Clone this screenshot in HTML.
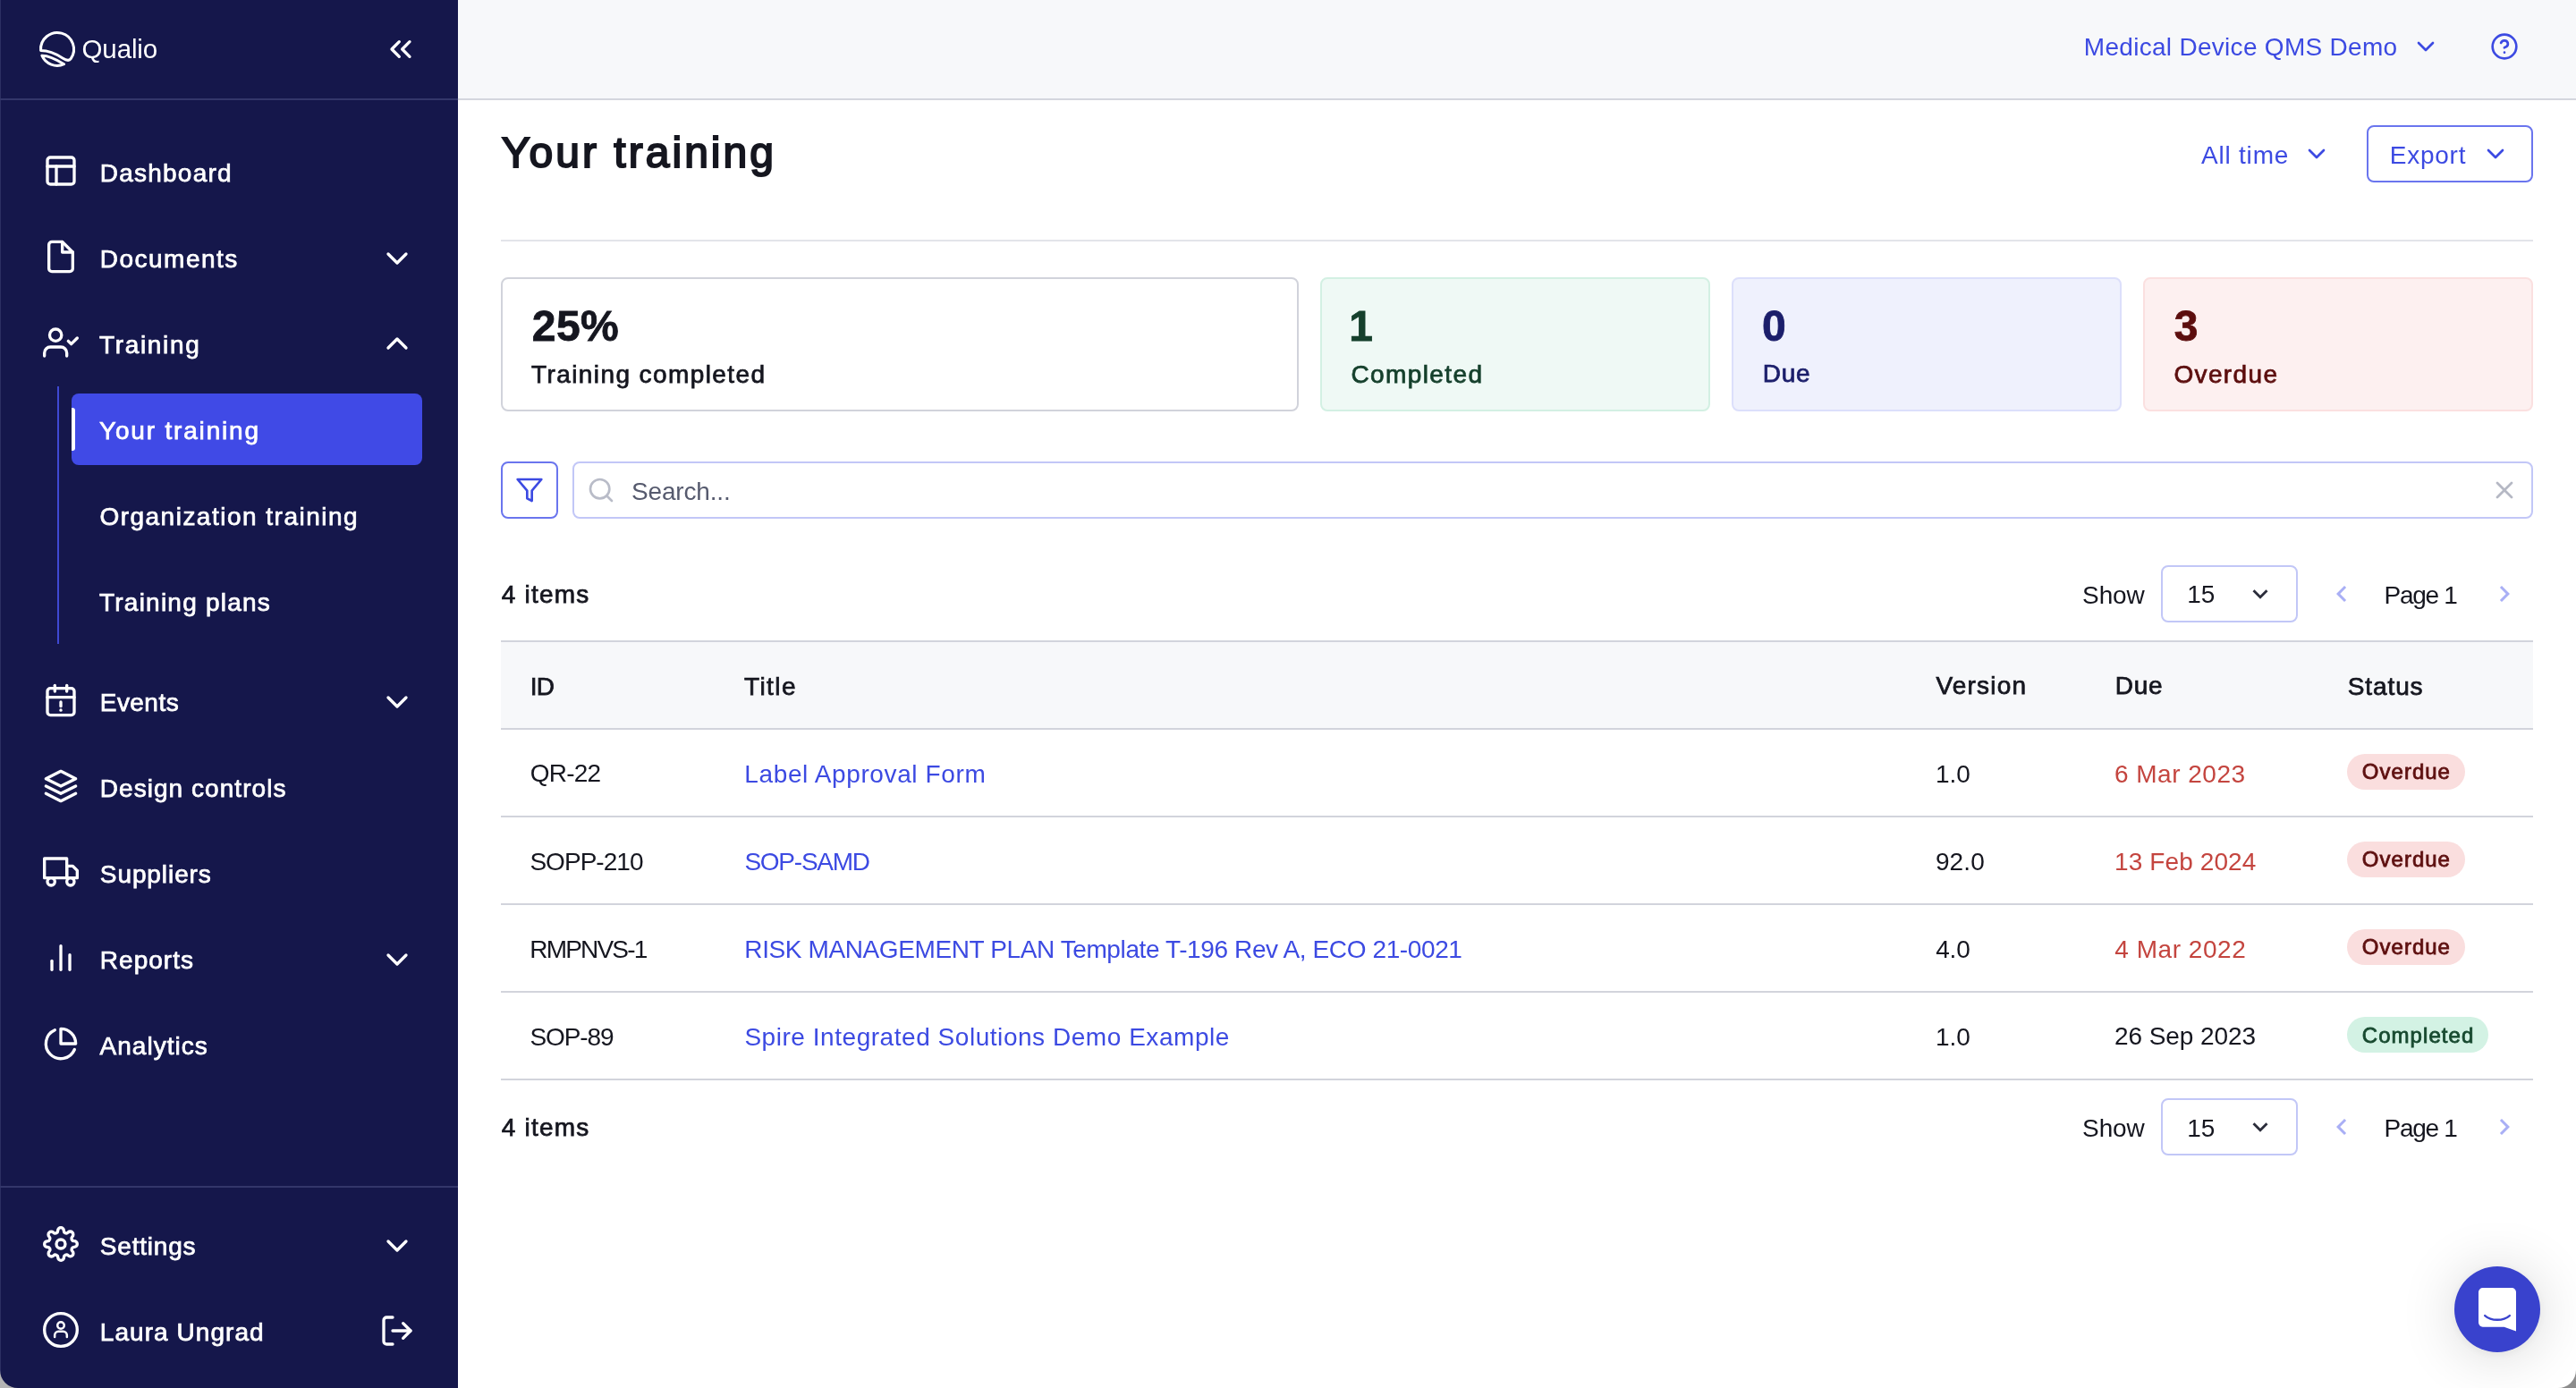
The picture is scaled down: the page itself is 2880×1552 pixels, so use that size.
<!DOCTYPE html>
<html lang="en">
<head>
<meta charset="utf-8">
<title>Your training - Qualio</title>
<style>
*{box-sizing:border-box;margin:0;padding:0}
html,body{width:2880px;height:1552px;overflow:hidden;background:#fff}
body{position:relative;font-family:"Liberation Sans",sans-serif;font-size:28px;color:#15161f}
.a{position:absolute}
svg.a{display:block;fill:none;stroke:currentColor;stroke-width:2;stroke-linecap:round;stroke-linejoin:round;overflow:visible}
svg.f{fill:currentColor;stroke:none}
.t{position:absolute;white-space:nowrap}
#root{position:absolute;left:0;top:0;width:2880px;height:1552px;will-change:transform}
</style>
</head>
<body>
<div id="root">
<div class="a" id="side" style="left:0;top:0;width:512px;height:1552px;background:#15174b"></div>
<div class="a" style="left:0px;top:0px;width:1px;height:1552px;background:#2c2f62"></div>
<div id="nav" style="color:#fff">
<svg class="a" style="left:44px;top:35px;width:40px;height:40px;stroke-width:3" viewBox="0 0 40 40"><path d="M1.6 21.5A18.5 18.5 0 1 1 35.2 30.6C33.5 33.2 30 32.6 26 30C20 26 12 21.5 1.6 21.5Z"/><path d="M2.9 27.2C11 27 19 31.5 27.6 36.7A18.5 18.5 0 0 1 2.9 27.2Z"/></svg>
<div class="t" style="left:91.52px;top:40.00px;font-size:29.5px;line-height:29.5px;letter-spacing:-0.119px">Qualio</div>
<svg class="a" style="left:428px;top:35px;width:40px;height:40px" viewBox="0 0 24 24"><polyline points="11 17 6 12 11 7"/><polyline points="18 17 13 12 18 7"/></svg>
<div class="a" style="left:0px;top:110px;width:512px;height:2px;background:#33366a"></div>
<svg class="a" style="left:48px;top:171px;width:40px;height:40px" viewBox="0 0 24 24"><rect x="3" y="3" width="18" height="18" rx="2" ry="2"/><line x1="3" y1="9" x2="21" y2="9"/><line x1="9" y1="21" x2="9" y2="9"/></svg>
<div class="t" style="left:111.76px;top:179.75px;font-size:28px;line-height:28px;letter-spacing:1.234px;-webkit-text-stroke:0.75px">Dashboard</div>
<svg class="a" style="left:48px;top:267px;width:40px;height:40px" viewBox="0 0 24 24"><path d="M13 2H6a2 2 0 0 0-2 2v16a2 2 0 0 0 2 2h12a2 2 0 0 0 2-2V9z"/><polyline points="13 2 13 9 20 9"/></svg>
<div class="t" style="left:111.76px;top:276.12px;font-size:28px;line-height:28px;letter-spacing:1.494px;-webkit-text-stroke:0.75px">Documents</div>
<svg class="a" style="left:424px;top:268.5px;width:40px;height:40px" viewBox="0 0 24 24"><polyline points="6 9 12 15 18 9"/></svg>
<svg class="a" style="left:48px;top:363px;width:40px;height:40px" viewBox="0 0 24 24"><path d="M16 21v-2a4 4 0 0 0-4-4H5a4 4 0 0 0-4 4v2"/><circle cx="8.5" cy="7" r="4"/><polyline points="17 11 19 13 23 9"/></svg>
<div class="t" style="left:110.99px;top:372.15px;font-size:28px;line-height:28px;letter-spacing:1.677px;-webkit-text-stroke:0.75px">Training</div>
<svg class="a" style="left:424px;top:363.75px;width:40px;height:40px" viewBox="0 0 24 24"><polyline points="18 15 12 9 6 15"/></svg>
<svg class="a" style="left:48px;top:763px;width:40px;height:40px" viewBox="0 0 24 24"><rect x="3" y="4" width="18" height="18" rx="2" ry="2"/><line x1="16" y1="2" x2="16" y2="6"/><line x1="8" y1="2" x2="8" y2="6"/><line x1="3" y1="10" x2="21" y2="10"/><line x1="12" y1="13.2" x2="12" y2="16"/><line x1="12" y1="18.6" x2="12" y2="18.7"/></svg>
<div class="t" style="left:111.76px;top:772.12px;font-size:28px;line-height:28px;letter-spacing:0.458px;-webkit-text-stroke:0.75px">Events</div>
<svg class="a" style="left:424px;top:764.5px;width:40px;height:40px" viewBox="0 0 24 24"><polyline points="6 9 12 15 18 9"/></svg>
<svg class="a" style="left:48px;top:859px;width:40px;height:40px" viewBox="0 0 24 24"><polygon points="12 2 2 7 12 12 22 7 12 2"/><polyline points="2 17 12 22 22 17"/><polyline points="2 12 12 17 22 12"/></svg>
<div class="t" style="left:111.76px;top:867.62px;font-size:28px;line-height:28px;letter-spacing:1.048px;-webkit-text-stroke:0.75px">Design controls</div>
<svg class="a" style="left:48px;top:955px;width:40px;height:40px" viewBox="0 0 24 24"><rect x="1" y="3" width="15" height="13"/><polygon points="16 8 20 8 23 11 23 16 16 16 16 8"/><circle cx="5.5" cy="18.5" r="2.5"/><circle cx="18.5" cy="18.5" r="2.5"/></svg>
<div class="t" style="left:111.81px;top:963.62px;font-size:28px;line-height:28px;letter-spacing:0.916px;-webkit-text-stroke:0.75px">Suppliers</div>
<svg class="a" style="left:48px;top:1051px;width:40px;height:40px" viewBox="0 0 24 24"><line x1="18" y1="20" x2="18" y2="10"/><line x1="12" y1="20" x2="12" y2="4"/><line x1="6" y1="20" x2="6" y2="14"/></svg>
<div class="t" style="left:111.76px;top:1060.00px;font-size:28px;line-height:28px;letter-spacing:1.042px;-webkit-text-stroke:0.75px">Reports</div>
<svg class="a" style="left:424px;top:1052.5px;width:40px;height:40px" viewBox="0 0 24 24"><polyline points="6 9 12 15 18 9"/></svg>
<svg class="a" style="left:48px;top:1147px;width:40px;height:40px" viewBox="0 0 24 24"><path d="M21.21 15.89A10 10 0 1 1 8 2.83"/><path d="M22 12A10 10 0 0 0 12 2v10z"/></svg>
<div class="t" style="left:111.42px;top:1155.62px;font-size:28px;line-height:28px;letter-spacing:1.052px;-webkit-text-stroke:0.75px">Analytics</div>
<svg class="a" style="left:48px;top:1371px;width:40px;height:40px" viewBox="0 0 24 24"><circle cx="12" cy="12" r="3"/><path d="M19.4 15a1.65 1.65 0 0 0 .33 1.82l.06.06a2 2 0 0 1 0 2.83 2 2 0 0 1-2.83 0l-.06-.06a1.65 1.65 0 0 0-1.82-.33 1.65 1.65 0 0 0-1 1.51V21a2 2 0 0 1-2 2 2 2 0 0 1-2-2v-.09A1.65 1.65 0 0 0 9 19.4a1.65 1.65 0 0 0-1.82.33l-.06.06a2 2 0 0 1-2.83 0 2 2 0 0 1 0-2.83l.06-.06a1.65 1.65 0 0 0 .33-1.82 1.65 1.65 0 0 0-1.51-1H3a2 2 0 0 1-2-2 2 2 0 0 1 2-2h.09A1.65 1.65 0 0 0 4.6 9a1.65 1.65 0 0 0-.33-1.82l-.06-.06a2 2 0 0 1 0-2.83 2 2 0 0 1 2.83 0l.06.06a1.65 1.65 0 0 0 1.82.33H9a1.65 1.65 0 0 0 1-1.51V3a2 2 0 0 1 2-2 2 2 0 0 1 2 2v.09a1.65 1.65 0 0 0 1 1.51 1.65 1.65 0 0 0 1.82-.33l.06-.06a2 2 0 0 1 2.83 0 2 2 0 0 1 0 2.83l-.06.06a1.65 1.65 0 0 0-.33 1.82V9a1.65 1.65 0 0 0 1.51 1H21a2 2 0 0 1 2 2 2 2 0 0 1-2 2h-.09a1.65 1.65 0 0 0-1.51 1z"/></svg>
<div class="t" style="left:111.81px;top:1380.15px;font-size:28px;line-height:28px;letter-spacing:0.797px;-webkit-text-stroke:0.75px">Settings</div>
<svg class="a" style="left:424px;top:1372.5px;width:40px;height:40px" viewBox="0 0 24 24"><polyline points="6 9 12 15 18 9"/></svg>
<svg class="a" style="left:48px;top:1467px;width:40px;height:40px" viewBox="0 0 24 24"><circle cx="12" cy="12" r="11"/><circle cx="12" cy="9" r="2.25" stroke-width="1.5"/><path stroke-width="1.5" d="M7.9 16.8v-1.2a2.5 2.5 0 0 1 2.5-2.5h3.2a2.5 2.5 0 0 1 2.5 2.5v1.2"/></svg>
<div class="t" style="left:111.76px;top:1475.62px;font-size:28px;line-height:28px;letter-spacing:1.060px;-webkit-text-stroke:0.75px">Laura Ungrad</div>
<svg class="a" style="left:424px;top:1468px;width:40px;height:40px" viewBox="0 0 24 24"><path d="M9 21H5a2 2 0 0 1-2-2V5a2 2 0 0 1 2-2h4"/><polyline points="16 17 21 12 16 7"/><line x1="21" y1="12" x2="9" y2="12"/></svg>
<div class="a" style="left:64px;top:432px;width:2px;height:288px;background:#3f49d3"></div>
<div class="a" style="left:80px;top:440px;width:392px;height:80px;border-radius:8px;background:#404ae6"></div>
<div class="a" style="left:80px;top:456px;width:4px;height:48px;border-radius:0 3px 3px 0;background:#fff"></div>
<div class="t" style="left:110.99px;top:468.15px;font-size:28px;line-height:28px;letter-spacing:1.824px;-webkit-text-stroke:0.75px">Your training</div>
<div class="t" style="left:111.38px;top:564.15px;font-size:28px;line-height:28px;letter-spacing:1.494px;-webkit-text-stroke:0.75px">Organization training</div>
<div class="t" style="left:110.99px;top:659.62px;font-size:28px;line-height:28px;letter-spacing:1.231px;-webkit-text-stroke:0.75px">Training plans</div>
<div class="a" style="left:0px;top:1326px;width:512px;height:2px;background:#33366a"></div>
</div>
<div class="a" style="left:512px;top:0px;width:2368px;height:110px;background:#f7f8fa"></div>
<div class="a" style="left:512px;top:110px;width:2368px;height:2px;background:#d4d6de"></div>
<div class="t" style="left:2329.81px;top:39.17px;font-size:28px;line-height:28px;letter-spacing:0.293px;color:#3c4ae2">Medical Device QMS Demo</div>
<svg class="a" style="left:2696px;top:36px;width:32px;height:32px;color:#3c4ae2" viewBox="0 0 24 24"><polyline points="6 9 12 15 18 9"/></svg>
<svg class="a" style="left:2784px;top:36px;width:32px;height:32px;color:#3c4ae2" viewBox="0 0 24 24"><circle cx="12" cy="12" r="10"/><path d="M9.09 9a3 3 0 0 1 5.83 1c0 2-3 3-3 3"/><line x1="12" y1="17" x2="12.01" y2="17"/></svg>
<div class="t" style="left:560.80px;top:146.57px;font-size:48px;line-height:48px;letter-spacing:3.038px;-webkit-text-stroke:2.0px">Your training</div>
<div class="t" style="left:2461.00px;top:159.70px;font-size:28px;line-height:28px;letter-spacing:0.789px;color:#3c4ae2">All time</div>
<svg class="a" style="left:2574px;top:156px;width:32px;height:32px;color:#3c4ae2" viewBox="0 0 24 24"><polyline points="6 9 12 15 18 9"/></svg>
<div class="a" style="left:2646px;top:140px;width:186px;height:64px;border:2px solid #6a75ee;border-radius:8px"></div>
<div class="t" style="left:2671.81px;top:159.95px;font-size:28px;line-height:28px;letter-spacing:0.744px;color:#3c4ae2">Export</div>
<svg class="a" style="left:2774px;top:156px;width:32px;height:32px;color:#3c4ae2" viewBox="0 0 24 24"><polyline points="6 9 12 15 18 9"/></svg>
<div class="a" style="left:560px;top:268px;width:2272px;height:2px;background:#e3e4ea"></div>
<div class="a" style="left:560px;top:310px;width:892px;height:150px;border:2px solid #d1d3db;border-radius:8px;background:#fff"></div>
<div class="t" style="left:594.80px;top:341.22px;font-size:48px;line-height:48px;letter-spacing:0.419px;font-weight:700;-webkit-text-stroke:0.8px;color:#15161f">25%</div>
<div class="t" style="left:593.99px;top:404.57px;font-size:28px;line-height:28px;letter-spacing:1.414px;-webkit-text-stroke:0.75px;color:#15161f">Training completed</div>
<div class="a" style="left:1476px;top:310px;width:436px;height:150px;border:2px solid #d3f0e3;border-radius:8px;background:#eff9f5"></div>
<div class="t" style="left:1508.18px;top:341.22px;font-size:48px;line-height:48px;font-weight:700;-webkit-text-stroke:0.8px;color:#15402c">1</div>
<div class="t" style="left:1510.38px;top:404.57px;font-size:28px;line-height:28px;letter-spacing:1.396px;-webkit-text-stroke:0.75px;color:#15402c">Completed</div>
<div class="a" style="left:1936px;top:310px;width:436px;height:150px;border:2px solid #dcdffb;border-radius:8px;background:#eff1fd"></div>
<div class="t" style="left:1970.00px;top:341.22px;font-size:48px;line-height:48px;font-weight:700;-webkit-text-stroke:0.8px;color:#1b1e6b">0</div>
<div class="t" style="left:1970.76px;top:404.27px;font-size:28px;line-height:28px;letter-spacing:0.753px;-webkit-text-stroke:0.75px;color:#1b1e6b">Due</div>
<div class="a" style="left:2396px;top:310px;width:436px;height:150px;border:2px solid #fbe0e0;border-radius:8px;background:#fdf0f0"></div>
<div class="t" style="left:2430.75px;top:341.22px;font-size:48px;line-height:48px;font-weight:700;-webkit-text-stroke:0.8px;color:#5c0e0e">3</div>
<div class="t" style="left:2430.38px;top:404.70px;font-size:28px;line-height:28px;letter-spacing:1.382px;-webkit-text-stroke:0.75px;color:#5c0e0e">Overdue</div>
<div class="a" style="left:560px;top:516px;width:64px;height:64px;border:2px solid #6a75ee;border-radius:8px;background:#fff"></div>
<svg class="a" style="left:576px;top:532px;width:32px;height:32px;color:#3c4ae2" viewBox="0 0 24 24"><polygon points="22 3 2 3 10 12.46 10 19 14 21 14 12.46 22 3"/></svg>
<div class="a" style="left:640px;top:516px;width:2192px;height:64px;border:2px solid #c2c7f7;border-radius:8px;background:#fff"></div>
<svg class="a" style="left:656px;top:532px;width:32px;height:32px;color:#b9bcc8" viewBox="0 0 24 24"><circle cx="11" cy="11" r="8"/><line x1="21" y1="21" x2="16.65" y2="16.65"/></svg>
<div class="t" style="left:706.12px;top:535.80px;font-size:28px;line-height:28px;letter-spacing:-0.188px;color:#565a6e">Search...</div>
<svg class="a" style="left:2784px;top:532px;width:32px;height:32px;color:#b5b8c4" viewBox="0 0 24 24"><line x1="18" y1="6" x2="6" y2="18"/><line x1="6" y1="6" x2="18" y2="18"/></svg>
<div class="t" style="left:560.67px;top:651.42px;font-size:28px;line-height:28px;letter-spacing:1.234px;-webkit-text-stroke:0.75px">4 items</div>
<div class="t" style="left:2328.12px;top:651.70px;font-size:28px;line-height:28px;letter-spacing:-0.143px">Show</div>
<div class="a" style="left:2415.5px;top:632px;width:153px;height:64px;border:2px solid #c2c7f7;border-radius:8px;background:#fff"></div>
<div class="t" style="left:2445.30px;top:651.27px;font-size:28px;line-height:28px;letter-spacing:-0.177px">15</div>
<svg class="a f" style="left:2509.8px;top:647.2px;width:34px;height:34px;color:#2b2d3b" viewBox="0 0 24 24"><path d="M16.59 8.59L12 13.17 7.41 8.59 6 10l6 6 6-6z"/></svg>
<svg class="a f" style="left:2599.5px;top:646.3px;width:36px;height:36px;color:#a9aff5" viewBox="0 0 24 24"><path d="M15.41 7.41L14 6l-6 6 6 6 1.41-1.41L10.83 12z"/></svg>
<div class="t" style="left:2665.49px;top:651.95px;font-size:28px;line-height:28px;letter-spacing:-1.264px">Page 1</div>
<svg class="a f" style="left:2781.5px;top:646.3px;width:36px;height:36px;color:#a9aff5" viewBox="0 0 24 24"><path d="M10 6L8.59 7.41 13.17 12l-4.58 4.59L10 18l6-6z"/></svg>
<div class="a" style="left:560px;top:716px;width:2272px;height:98px;background:#f7f8fa"></div>
<div class="a" style="left:560px;top:716px;width:2272px;height:2px;background:#d2d4dc"></div>
<div class="a" style="left:560px;top:814px;width:2272px;height:2px;background:#d2d4dc"></div>
<div class="a" style="left:560px;top:912px;width:2272px;height:2px;background:#d2d4dc"></div>
<div class="a" style="left:560px;top:1010px;width:2272px;height:2px;background:#d2d4dc"></div>
<div class="a" style="left:560px;top:1108px;width:2272px;height:2px;background:#d2d4dc"></div>
<div class="a" style="left:560px;top:1206px;width:2272px;height:2px;background:#d2d4dc"></div>
<div class="t" style="left:592.76px;top:753.55px;font-size:28px;line-height:28px;letter-spacing:-0.814px;-webkit-text-stroke:0.75px">ID</div>
<div class="t" style="left:831.99px;top:753.70px;font-size:28px;line-height:28px;letter-spacing:1.415px;-webkit-text-stroke:0.75px">Title</div>
<div class="t" style="left:2164.43px;top:753.42px;font-size:28px;line-height:28px;letter-spacing:1.205px;-webkit-text-stroke:0.75px">Version</div>
<div class="t" style="left:2364.76px;top:753.27px;font-size:28px;line-height:28px;letter-spacing:0.753px;-webkit-text-stroke:0.75px">Due</div>
<div class="t" style="left:2624.81px;top:753.55px;font-size:28px;line-height:28px;letter-spacing:0.888px;-webkit-text-stroke:0.75px">Status</div>
<div class="t" style="left:592.75px;top:850.80px;font-size:28px;line-height:28px;letter-spacing:-0.809px">QR-22</div>
<div class="t" style="left:832.34px;top:851.57px;font-size:28px;line-height:28px;letter-spacing:0.615px;color:#3c4ae2">Label Approval Form</div>
<div class="t" style="left:2164.09px;top:851.55px;font-size:28px;line-height:28px;letter-spacing:-0.149px">1.0</div>
<div class="t" style="left:2363.95px;top:851.55px;font-size:28px;line-height:28px;letter-spacing:0.495px;color:#c4453f">6 Mar 2023</div>
<div class="a" style="left:2624px;top:843px;width:132px;height:40px;border-radius:20px;background:#fadede"></div>
<div class="t" style="left:2640.86px;top:851.16px;font-size:24px;line-height:24px;letter-spacing:1.002px;-webkit-text-stroke:0.8px;color:#5e1010">Overdue</div>
<div class="t" style="left:592.39px;top:949.55px;font-size:28px;line-height:28px;letter-spacing:-0.953px">SOPP-210</div>
<div class="t" style="left:832.39px;top:949.55px;font-size:28px;line-height:28px;letter-spacing:-1.233px;color:#3c4ae2">SOP-SAMD</div>
<div class="t" style="left:2163.95px;top:949.55px;font-size:28px;line-height:28px;letter-spacing:0.100px">92.0</div>
<div class="t" style="left:2364.09px;top:949.70px;font-size:28px;line-height:28px;letter-spacing:0.098px;color:#c4453f">13 Feb 2024</div>
<div class="a" style="left:2624px;top:941px;width:132px;height:40px;border-radius:20px;background:#fadede"></div>
<div class="t" style="left:2640.86px;top:949.16px;font-size:24px;line-height:24px;letter-spacing:1.002px;-webkit-text-stroke:0.8px;color:#5e1010">Overdue</div>
<div class="t" style="left:592.34px;top:1047.55px;font-size:28px;line-height:28px;letter-spacing:-1.823px">RMPNVS-1</div>
<div class="t" style="left:832.34px;top:1047.57px;font-size:28px;line-height:28px;letter-spacing:-0.390px;color:#3c4ae2">RISK MANAGEMENT PLAN Template T-196 Rev A, ECO 21-0021</div>
<div class="t" style="left:2164.25px;top:1047.55px;font-size:28px;line-height:28px;letter-spacing:-0.230px">4.0</div>
<div class="t" style="left:2364.25px;top:1047.55px;font-size:28px;line-height:28px;letter-spacing:0.538px;color:#c4453f">4 Mar 2022</div>
<div class="a" style="left:2624px;top:1039px;width:132px;height:40px;border-radius:20px;background:#fadede"></div>
<div class="t" style="left:2640.86px;top:1047.16px;font-size:24px;line-height:24px;letter-spacing:1.002px;-webkit-text-stroke:0.8px;color:#5e1010">Overdue</div>
<div class="t" style="left:592.39px;top:1145.55px;font-size:28px;line-height:28px;letter-spacing:-1.058px">SOP-89</div>
<div class="t" style="left:832.39px;top:1145.57px;font-size:28px;line-height:28px;letter-spacing:0.541px;color:#3c4ae2">Spire Integrated Solutions Demo Example</div>
<div class="t" style="left:2164.09px;top:1145.55px;font-size:28px;line-height:28px;letter-spacing:-0.149px">1.0</div>
<div class="t" style="left:2363.95px;top:1145.42px;font-size:28px;line-height:28px;letter-spacing:-0.061px">26 Sep 2023</div>
<div class="a" style="left:2624px;top:1137px;width:158px;height:40px;border-radius:20px;background:#d3f2e4"></div>
<div class="t" style="left:2640.76px;top:1145.76px;font-size:24px;line-height:24px;letter-spacing:1.057px;-webkit-text-stroke:0.8px;color:#17492f">Completed</div>
<div class="t" style="left:560.67px;top:1247.47px;font-size:28px;line-height:28px;letter-spacing:1.234px;-webkit-text-stroke:0.75px">4 items</div>
<div class="t" style="left:2328.12px;top:1247.75px;font-size:28px;line-height:28px;letter-spacing:-0.143px">Show</div>
<div class="a" style="left:2415.5px;top:1228px;width:153px;height:64px;border:2px solid #c2c7f7;border-radius:8px;background:#fff"></div>
<div class="t" style="left:2445.30px;top:1248.12px;font-size:28px;line-height:28px;letter-spacing:-0.177px">15</div>
<svg class="a f" style="left:2509.8px;top:1243.2px;width:34px;height:34px;color:#2b2d3b" viewBox="0 0 24 24"><path d="M16.59 8.59L12 13.17 7.41 8.59 6 10l6 6 6-6z"/></svg>
<svg class="a f" style="left:2599.5px;top:1242.3px;width:36px;height:36px;color:#a9aff5" viewBox="0 0 24 24"><path d="M15.41 7.41L14 6l-6 6 6 6 1.41-1.41L10.83 12z"/></svg>
<div class="t" style="left:2665.49px;top:1248.00px;font-size:28px;line-height:28px;letter-spacing:-1.264px">Page 1</div>
<svg class="a f" style="left:2781.5px;top:1242.3px;width:36px;height:36px;color:#a9aff5" viewBox="0 0 24 24"><path d="M10 6L8.59 7.41 13.17 12l-4.58 4.59L10 18l6-6z"/></svg>
<div class="a" style="left:2744px;top:1416px;width:96px;height:96px;border-radius:48px;background:#3942cd;box-shadow:0 2px 12px rgba(0,0,0,.06),0 4px 64px rgba(0,0,0,.16)"></div>
<svg class="a" style="left:2771px;top:1439.7px;width:42px;height:48.5px;stroke:none" viewBox="0 0 44 50" preserveAspectRatio="none"><path fill="#fff" d="M5 0H39A5 5 0 0 1 44 5V50L30 45H5A5 5 0 0 1 0 40V5A5 5 0 0 1 5 0Z"/><path fill="none" stroke="#3942cd" stroke-width="2.4" stroke-linecap="round" d="M7.5 32C15 38.5 29 38.5 36.5 32"/></svg>
<svg class="a" style="left:0;top:1532px;width:20px;height:20px;stroke:none" viewBox="0 0 20 20"><path fill="#b4b4b4" d="M0 0V20H20A20 20 0 0 1 0 0Z"/></svg>
<svg class="a" style="left:2860px;top:1532px;width:20px;height:20px;stroke:none" viewBox="0 0 20 20"><path fill="#8c8c8c" d="M20 0V20H0A20 20 0 0 0 20 0Z"/></svg>
</div>
</body>
</html>
